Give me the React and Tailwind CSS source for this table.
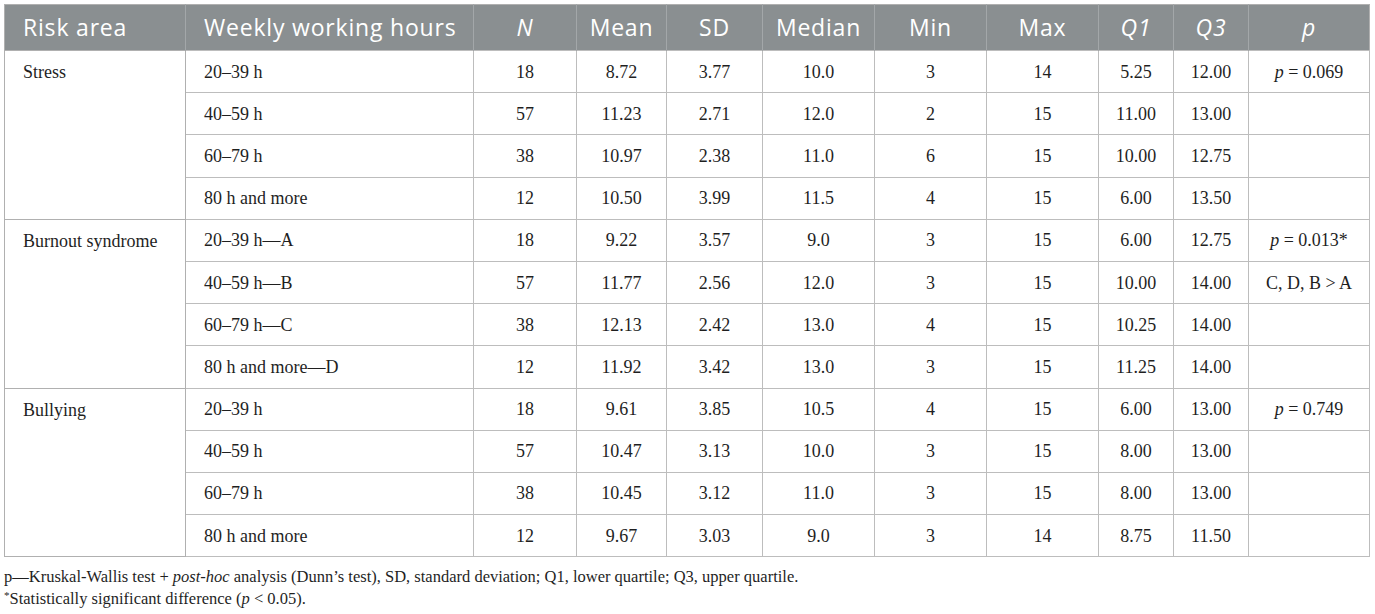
import React from "react";

const groups = [
  {
    name: "Stress",
    rows: [
      ["20–39 h", "18", "8.72", "3.77", "10.0", "3", "14", "5.25", "12.00", "p069"],
      ["40–59 h", "57", "11.23", "2.71", "12.0", "2", "15", "11.00", "13.00", ""],
      ["60–79 h", "38", "10.97", "2.38", "11.0", "6", "15", "10.00", "12.75", ""],
      ["80 h and more", "12", "10.50", "3.99", "11.5", "4", "15", "6.00", "13.50", ""],
    ],
  },
  {
    name: "Burnout syndrome",
    rows: [
      ["20–39 h—A", "18", "9.22", "3.57", "9.0", "3", "15", "6.00", "12.75", "p013"],
      ["40–59 h—B", "57", "11.77", "2.56", "12.0", "3", "15", "10.00", "14.00", "cdba"],
      ["60–79 h—C", "38", "12.13", "2.42", "13.0", "4", "15", "10.25", "14.00", ""],
      ["80 h and more—D", "12", "11.92", "3.42", "13.0", "3", "15", "11.25", "14.00", ""],
    ],
  },
  {
    name: "Bullying",
    rows: [
      ["20–39 h", "18", "9.61", "3.85", "10.5", "4", "15", "6.00", "13.00", "p749"],
      ["40–59 h", "57", "10.47", "3.13", "10.0", "3", "15", "8.00", "13.00", ""],
      ["60–79 h", "38", "10.45", "3.12", "11.0", "3", "15", "8.00", "13.00", ""],
      ["80 h and more", "12", "9.67", "3.03", "9.0", "3", "14", "8.75", "11.50", ""],
    ],
  },
];

function PCell({ v }) {
  if (v === "p069")
    return (
      <>
        <i>p</i> = 0.069
      </>
    );
  if (v === "p013")
    return (
      <>
        <i>p</i> = 0.013*
      </>
    );
  if (v === "p749")
    return (
      <>
        <i>p</i> = 0.749
      </>
    );
  if (v === "cdba") return <>C, D, B &gt; A</>;
  return null;
}

const serif = { fontFamily: '"Liberation Serif", "Times New Roman", serif' };

export default function App() {
  return (
    <div className="w-[1375px] h-[614px] bg-white overflow-hidden pt-[4px] pl-[4px]">
      <table
        className="table-fixed border-collapse w-[1365px] border border-[#b0b0b0] text-[#1f1f1f]"
        style={serif}
      >
        <colgroup>
          <col className="w-[181px]" />
          <col className="w-[288px]" />
          <col className="w-[103px]" />
          <col className="w-[90px]" />
          <col className="w-[96px]" />
          <col className="w-[112px]" />
          <col className="w-[112px]" />
          <col className="w-[112px]" />
          <col className="w-[75px]" />
          <col className="w-[75px]" />
          <col className="w-[121px]" />
        </colgroup>
        <thead>
          <tr
            className="h-[46px] bg-[#8a8f91] text-white text-[23px] tracking-[0.035em] font-normal"
            style={{ fontFamily: '"Open Sans", "Noto Sans", sans-serif' }}
          >
            <th className="text-left font-normal pl-[18px] border-r border-[#a3a7a9]">Risk area</th>
            <th className="text-left font-normal pl-[18px] border-r border-[#a3a7a9]">Weekly working hours</th>
            <th className="font-normal italic border-r border-[#a3a7a9]">N</th>
            <th className="font-normal border-r border-[#a3a7a9]">Mean</th>
            <th className="font-normal border-r border-[#a3a7a9]">SD</th>
            <th className="font-normal border-r border-[#a3a7a9]">Median</th>
            <th className="font-normal border-r border-[#a3a7a9]">Min</th>
            <th className="font-normal border-r border-[#a3a7a9]">Max</th>
            <th className="font-normal italic border-r border-[#a3a7a9]">Q1</th>
            <th className="font-normal italic border-r border-[#a3a7a9]">Q3</th>
            <th className="font-normal italic">p</th>
          </tr>
        </thead>
        <tbody className="text-[18px]">
          {groups.map((g) =>
            g.rows.map((r, i) => (
              <tr key={g.name + i} className="h-[42.2px]">
                {i === 0 && (
                  <td
                    rowSpan={4}
                    className="align-top pt-[10px] pl-[18px] border border-[#b0b0b0] leading-[22px]"
                  >
                    {g.name}
                  </td>
                )}
                <td className="pl-[18px] border border-[#bdbdbd] leading-[22px]">{r[0]}</td>
                {r.slice(1, 9).map((c, j) => (
                  <td key={j} className="text-center border border-[#bdbdbd] leading-[22px]">
                    {c}
                  </td>
                ))}
                <td className="text-center border border-[#bdbdbd] leading-[22px]">
                  <PCell v={r[9]} />
                </td>
              </tr>
            ))
          )}
        </tbody>
      </table>
      <div className="text-[16.5px] leading-[22px] text-[#1f1f1f] mt-[9px]" style={serif}>
        <p>
          p—Kruskal-Wallis test + <i>post-hoc</i> analysis (Dunn’s test), SD, standard deviation; Q1, lower quartile; Q3, upper quartile.
        </p>
        <p>
          <sup className="text-[11px]">*</sup>Statistically significant difference (<i>p</i> &lt; 0.05).
        </p>
      </div>
    </div>
  );
}
